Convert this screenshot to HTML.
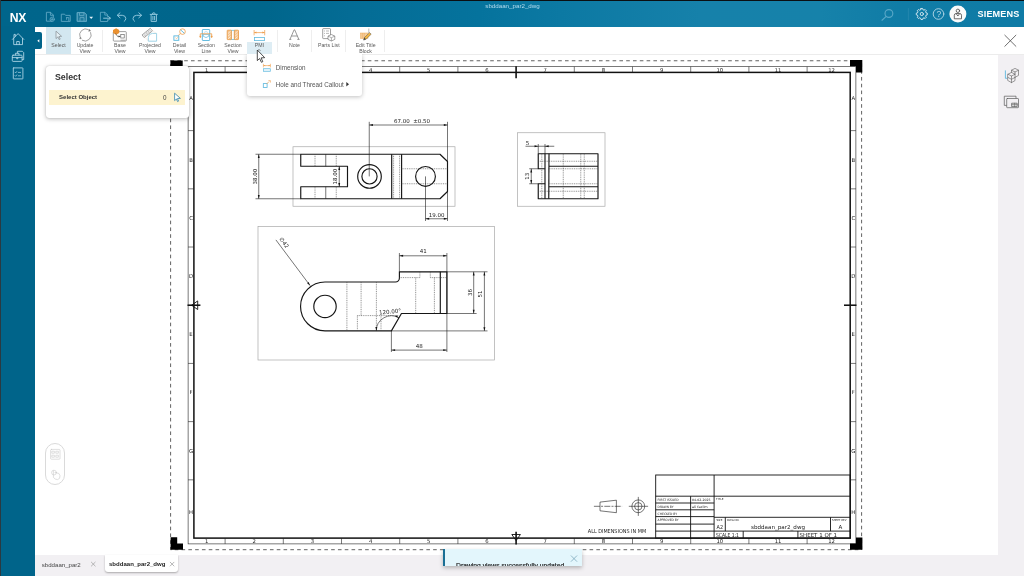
<!DOCTYPE html>
<html lang="en"><head><meta charset="utf-8"><title>NX - sbddaan_par2_dwg</title>
<style>
*{box-sizing:border-box;margin:0;padding:0}
html,body{width:1024px;height:576px;overflow:hidden;background:#fff;font-family:"Liberation Sans",sans-serif}
#app{position:relative;width:1024px;height:576px;overflow:hidden;background:#fff}
.fx{position:absolute;left:-12px;top:-12px;width:1048px;height:600px;background:#fff;filter:blur(.4px)}
.in{position:absolute;left:12px;top:12px;width:1024px;height:576px}
.abs{position:absolute}
.header{position:absolute;left:-12px;top:-12px;width:1048px;height:38.6px;background:linear-gradient(90deg,#00658b 12px,#00668c 278px,#046c95 362px,#05739d 492px,#0c79a3 572px,#1681aa 712px,#1682aa 832px,#107ca6 912px,#0f7ba6 1036px)}
.topblack{position:absolute;left:-12px;top:-12px;width:1048px;height:13.4px;background:#0b0f12}
.leftblack{position:absolute;left:-12px;top:-12px;width:13px;height:600px;background:#2a3a42}
.sidebar{position:absolute;left:-12px;top:26px;width:47px;height:562px;background:#00648a}
.nx{position:absolute;left:9.8px;top:10.7px;font-weight:bold;font-size:12.2px;line-height:14px;color:#fff;letter-spacing:-.35px}
.title{position:absolute;left:412.5px;width:200px;top:2.3px;text-align:center;color:#b4dcee;font-size:6.2px;line-height:7px}
.siemens{position:absolute;left:977.5px;top:8.6px;color:#fff;font-weight:bold;font-size:9.1px;line-height:11px;letter-spacing:.15px}
.toolbar{position:absolute;left:35px;top:26.5px;width:1001px;height:28px;background:#fff;border-bottom:1px solid #ececec}
.tb{position:absolute;top:27px;height:27px;text-align:center;color:#5a5a5a;font-size:5.2px;line-height:5.7px}
.tb span{position:absolute;left:-20px;right:-20px;top:16.2px}
.sep{position:absolute;top:29.5px;width:1px;height:22px;background:#eeeeee}
.panel{position:absolute;left:46px;top:65.5px;width:143px;height:52.5px;background:#fff;border-radius:3px;box-shadow:0 1px 4px rgba(0,0,0,.28),0 0 1px rgba(0,0,0,.25)}
.panel h1{position:absolute;left:9px;top:5.3px;font-size:8.8px;line-height:12px;color:#333;font-weight:bold}
.row{position:absolute;left:2.5px;top:24.9px;width:136.5px;height:14.9px;background:#fdf3cf}
.row b{position:absolute;left:10.6px;top:3.6px;font-size:6px;line-height:7px;color:#333}
.row i{position:absolute;left:114.6px;top:3.8px;font-size:6.3px;line-height:7px;color:#444;font-style:normal}
.menu{position:absolute;left:247px;top:54px;width:115px;height:42.2px;background:#fff;border-radius:0 0 3px 3px;box-shadow:0 1px 4px rgba(0,0,0,.25);clip-path:inset(0 -8px -8px -8px)}
.menu div{position:absolute;left:28.7px;font-size:6.3px;line-height:8px;color:#555;white-space:nowrap}
.right{position:absolute;left:998.2px;top:55px;width:38px;height:501px;background:#f2f0f3}
.tabs{position:absolute;left:35px;top:555.2px;width:1001px;height:33px;background:#f2f0f3}
.tab1{position:absolute;left:41.8px;top:560.5px;font-size:6.1px;line-height:8px;color:#444}
.tab2{position:absolute;left:104.5px;top:555.2px;width:73.5px;height:16.6px;background:#fff;border-radius:0 0 3px 3px;box-shadow:0 1px 2px rgba(0,0,0,.3)}
.tab2 b{position:absolute;left:4.5px;top:5.3px;font-size:6.05px;line-height:8px;color:#222}
.toast{position:absolute;left:443.3px;top:549.1px;width:138.7px;height:17.3px;background:#e3f6fc;border-left:2px solid #1a6f95;overflow:hidden;box-shadow:0 2px 4px rgba(0,0,0,.25)}
.toast span{position:absolute;left:10.8px;top:13.3px;font-size:6.75px;line-height:8px;color:#262626;-webkit-text-stroke:.2px #262626;white-space:nowrap}
.pill{position:absolute;left:45.2px;top:443.3px;width:20px;height:41.8px;border:1.2px solid #dadada;border-radius:10px;background:#fff}
svg{position:absolute;left:0;top:0;overflow:visible}
#dr{width:1024px;height:576px}
#dr .t{stroke:#222;stroke-width:.6;fill:none}
#dr .fr{stroke:#111;stroke-width:1.5;fill:none}
#dr .dash{stroke:#3a3a3a;stroke-width:.8;fill:none;stroke-dasharray:3.6 3.2}
#dr .cm{stroke:#111;stroke-width:1.6;fill:none}
#dr .blk{fill:#000}
#dr .vb{stroke:#a8a8a8;stroke-width:.7;fill:none}
#dr .k{stroke:#151515;stroke-width:1.15;fill:none;stroke-linejoin:round}
#dr .k1{stroke:#1a1a1a;stroke-width:.6;fill:none}
#dr .k3{stroke:#111;stroke-width:.9;fill:none}
#dr .k2{stroke:#1a1a1a;stroke-width:.6;fill:none}
#dr .h{stroke:#4a4a4a;stroke-width:.6;fill:none;stroke-dasharray:1 .8}
#dr .dm{stroke:#1a1a1a;stroke-width:.6;fill:none}
#dr .a{fill:#111}
#dr .tbl{stroke:#111;stroke-width:.9;fill:none}
#dr text{font-family:"DejaVu Sans","Liberation Sans",sans-serif;fill:#222}
#dr .d{font-size:5.5px}
#dr .z{font-size:5.3px}
#dr .tt{font-size:3.2px}
#dr .ts{font-size:2.8px}
</style></head>
<body>
<div id="app"><div class="fx"><div class="in">
<!-- canvas drawing -->
<svg id="dr" viewBox="0 0 1024 576">
<rect class="dash" x="170.6" y="60.75" width="691" height="488.95"/>
<rect class="t" x="188.1" y="66.7" width="667.8" height="477.2"/>
<rect class="fr" x="193.9" y="72.4" width="656.3" height="465.7"/>
<line class="t" x1="225.1" y1="66.7" x2="225.1" y2="72.4"/>
<line class="t" x1="225.1" y1="538.1" x2="225.1" y2="543.9"/>
<line class="t" x1="283.3" y1="66.7" x2="283.3" y2="72.4"/>
<line class="t" x1="283.3" y1="538.1" x2="283.3" y2="543.9"/>
<line class="t" x1="341.5" y1="66.7" x2="341.5" y2="72.4"/>
<line class="t" x1="341.5" y1="538.1" x2="341.5" y2="543.9"/>
<line class="t" x1="399.7" y1="66.7" x2="399.7" y2="72.4"/>
<line class="t" x1="399.7" y1="538.1" x2="399.7" y2="543.9"/>
<line class="t" x1="457.9" y1="66.7" x2="457.9" y2="72.4"/>
<line class="t" x1="457.9" y1="538.1" x2="457.9" y2="543.9"/>
<line class="t" x1="574.3" y1="66.7" x2="574.3" y2="72.4"/>
<line class="t" x1="574.3" y1="538.1" x2="574.3" y2="543.9"/>
<line class="t" x1="632.5" y1="66.7" x2="632.5" y2="72.4"/>
<line class="t" x1="632.5" y1="538.1" x2="632.5" y2="543.9"/>
<line class="t" x1="690.7" y1="66.7" x2="690.7" y2="72.4"/>
<line class="t" x1="690.7" y1="538.1" x2="690.7" y2="543.9"/>
<line class="t" x1="748.9" y1="66.7" x2="748.9" y2="72.4"/>
<line class="t" x1="748.9" y1="538.1" x2="748.9" y2="543.9"/>
<line class="t" x1="807.1" y1="66.7" x2="807.1" y2="72.4"/>
<line class="t" x1="807.1" y1="538.1" x2="807.1" y2="543.9"/>
<line class="t" x1="188.1" y1="130.62" x2="193.9" y2="130.62"/>
<line class="t" x1="850.2" y1="130.62" x2="855.9" y2="130.62"/>
<line class="t" x1="188.1" y1="188.83" x2="193.9" y2="188.83"/>
<line class="t" x1="850.2" y1="188.83" x2="855.9" y2="188.83"/>
<line class="t" x1="188.1" y1="247.03" x2="193.9" y2="247.03"/>
<line class="t" x1="850.2" y1="247.03" x2="855.9" y2="247.03"/>
<line class="t" x1="188.1" y1="363.43" x2="193.9" y2="363.43"/>
<line class="t" x1="850.2" y1="363.43" x2="855.9" y2="363.43"/>
<line class="t" x1="188.1" y1="421.62" x2="193.9" y2="421.62"/>
<line class="t" x1="850.2" y1="421.62" x2="855.9" y2="421.62"/>
<line class="t" x1="188.1" y1="479.83" x2="193.9" y2="479.83"/>
<line class="t" x1="850.2" y1="479.83" x2="855.9" y2="479.83"/>
<text class="z" x="206.6" y="71.6" text-anchor="middle">1</text>
<text class="z" x="206.6" y="543.2" text-anchor="middle">1</text>
<text class="z" x="254.2" y="71.6" text-anchor="middle">2</text>
<text class="z" x="254.2" y="543.2" text-anchor="middle">2</text>
<text class="z" x="312.4" y="71.6" text-anchor="middle">3</text>
<text class="z" x="312.4" y="543.2" text-anchor="middle">3</text>
<text class="z" x="370.6" y="71.6" text-anchor="middle">4</text>
<text class="z" x="370.6" y="543.2" text-anchor="middle">4</text>
<text class="z" x="428.8" y="71.6" text-anchor="middle">5</text>
<text class="z" x="428.8" y="543.2" text-anchor="middle">5</text>
<text class="z" x="487" y="71.6" text-anchor="middle">6</text>
<text class="z" x="487" y="543.2" text-anchor="middle">6</text>
<text class="z" x="545.2" y="71.6" text-anchor="middle">7</text>
<text class="z" x="545.2" y="543.2" text-anchor="middle">7</text>
<text class="z" x="603.4" y="71.6" text-anchor="middle">8</text>
<text class="z" x="603.4" y="543.2" text-anchor="middle">8</text>
<text class="z" x="661.6" y="71.6" text-anchor="middle">9</text>
<text class="z" x="661.6" y="543.2" text-anchor="middle">9</text>
<text class="z" x="719.8" y="71.6" text-anchor="middle">10</text>
<text class="z" x="719.8" y="543.2" text-anchor="middle">10</text>
<text class="z" x="778" y="71.6" text-anchor="middle">11</text>
<text class="z" x="778" y="543.2" text-anchor="middle">11</text>
<text class="z" x="831.5" y="71.6" text-anchor="middle">12</text>
<text class="z" x="831.5" y="543.2" text-anchor="middle">12</text>
<text class="z" x="191" y="100.46" text-anchor="middle">A</text>
<text class="z" x="853.3" y="100.46" text-anchor="middle">A</text>
<text class="z" x="191" y="161.53" text-anchor="middle">B</text>
<text class="z" x="853.3" y="161.53" text-anchor="middle">B</text>
<text class="z" x="191" y="219.73" text-anchor="middle">C</text>
<text class="z" x="853.3" y="219.73" text-anchor="middle">C</text>
<text class="z" x="191" y="277.93" text-anchor="middle">D</text>
<text class="z" x="853.3" y="277.93" text-anchor="middle">D</text>
<text class="z" x="191" y="336.13" text-anchor="middle">E</text>
<text class="z" x="853.3" y="336.13" text-anchor="middle">E</text>
<text class="z" x="191" y="394.32" text-anchor="middle">F</text>
<text class="z" x="853.3" y="394.32" text-anchor="middle">F</text>
<text class="z" x="191" y="452.53" text-anchor="middle">G</text>
<text class="z" x="853.3" y="452.53" text-anchor="middle">G</text>
<text class="z" x="191" y="513.66" text-anchor="middle">H</text>
<text class="z" x="853.3" y="513.66" text-anchor="middle">H</text>
<line class="cm" x1="516.1" y1="66.2" x2="516.1" y2="78.3"/>
<line class="cm" x1="516.1" y1="531.8" x2="516.1" y2="544.6"/>
<path class="k3" d="M511.8 534.5H520.4L516.1 540.6Z"/>
<line class="cm" x1="187.5" y1="305.23" x2="200.4" y2="305.23"/>
<path class="k3" d="M197.7 300.93V309.53L191.6 305.23Z"/>
<line class="cm" x1="844" y1="305.23" x2="856.5" y2="305.23"/>
<path class="blk" d="M170.4 60.5H182.7V72.5H176.6V66.2H170.4Z"/>
<path class="blk" d="M850 60H862.3V72.5H856V66.2H850Z"/>
<path class="blk" d="M170.6 537.3H177.2V543.4H183V549.8H170.6Z"/>
<path class="blk" d="M856 537.4H862.4V549.8H850V543.4H856Z"/>
<rect class="vb" x="293" y="146.75" width="162" height="59.5"/>
<path class="k" d="M300.75 154.25H440L447.5 161.5V191.5L440 198.75H300.75V186.75H347.5V166.25H300.75Z"/>
<line class="k" x1="391.7" y1="154.25" x2="391.7" y2="198.75"/>
<line class="k" x1="401.6" y1="154.25" x2="401.6" y2="198.75"/>
<line class="k1" x1="325.75" y1="154.25" x2="325.75" y2="166.25"/>
<line class="k1" x1="325.75" y1="186.75" x2="325.75" y2="198.75"/>
<line class="h" x1="315" y1="154.25" x2="315" y2="166.25"/>
<line class="h" x1="315" y1="186.75" x2="315" y2="198.75"/>
<line class="h" x1="336.25" y1="154.25" x2="336.25" y2="166.25"/>
<line class="h" x1="336.25" y1="186.75" x2="336.25" y2="198.75"/>
<line class="h" x1="393.6" y1="154.25" x2="393.6" y2="198.75"/>
<line class="h" x1="399.6" y1="154.25" x2="399.6" y2="198.75"/>
<line class="h" x1="401.6" y1="168.75" x2="447.5" y2="168.75"/>
<line class="h" x1="401.6" y1="183.75" x2="447.5" y2="183.75"/>
<circle class="k" cx="369.5" cy="176.4" r="11.8"/>
<circle class="k" cx="369.5" cy="176.4" r="7.6"/>
<circle class="k" cx="425.5" cy="176.4" r="9.9"/>
<line class="dm" x1="369.25" y1="121.8" x2="369.25" y2="176.4"/>
<line class="dm" x1="447.5" y1="121.8" x2="447.5" y2="221"/>
<line class="dm" x1="369.25" y1="125" x2="447.5" y2="125"/>
<polygon class="a" points="369.25,125 372.95,124.05 372.95,125.95"/>
<polygon class="a" points="447.5,125 443.8,125.95 443.8,124.05"/>
<text class="d" x="412" y="123" text-anchor="middle">67.00  ±0.50</text>
<line class="dm" x1="255.5" y1="154.25" x2="300.75" y2="154.25"/>
<line class="dm" x1="255.5" y1="198.75" x2="300.75" y2="198.75"/>
<line class="dm" x1="258.75" y1="154.25" x2="258.75" y2="198.75"/>
<polygon class="a" points="258.75,154.25 259.7,157.95 257.8,157.95"/>
<polygon class="a" points="258.75,198.75 257.8,195.05 259.7,195.05"/>
<text class="d" x="256.6" y="176.5" text-anchor="middle" transform="rotate(-90 256.6 176.5)">38.00</text>
<line class="dm" x1="339.25" y1="166.25" x2="339.25" y2="186.75"/>
<polygon class="a" points="339.25,166.25 340.2,169.95 338.3,169.95"/>
<polygon class="a" points="339.25,186.75 338.3,183.05 340.2,183.05"/>
<text class="d" x="337.2" y="176.5" text-anchor="middle" transform="rotate(-90 337.2 176.5)">18.00</text>
<line class="dm" x1="425.5" y1="176.4" x2="425.5" y2="221"/>
<line class="dm" x1="425.5" y1="218.75" x2="447.5" y2="218.75"/>
<polygon class="a" points="425.5,218.75 429.2,217.8 429.2,219.7"/>
<polygon class="a" points="447.5,218.75 443.8,219.7 443.8,217.8"/>
<text class="d" x="436.7" y="216.6" text-anchor="middle">19.00</text>
<rect class="vb" x="517.5" y="132.75" width="87.5" height="73.5"/>
<path class="k" d="M538.25 153.75H598V198.75H538.25V183.75H545V168.75H538.25Z"/>
<line class="k" x1="545" y1="153.75" x2="545" y2="168.75"/>
<line class="k" x1="545" y1="183.75" x2="545" y2="198.75"/>
<line class="k" x1="549" y1="153.75" x2="548.75" y2="198.75"/>
<line class="k" x1="549" y1="166.25" x2="598" y2="166.25"/>
<line class="k" x1="549" y1="186.75" x2="598" y2="186.75"/>
<line class="h" x1="538.25" y1="161.25" x2="598" y2="161.25"/>
<line class="h" x1="548.75" y1="168.75" x2="598" y2="168.75"/>
<line class="h" x1="548.75" y1="183.75" x2="598" y2="183.75"/>
<line class="h" x1="538.25" y1="191.25" x2="598" y2="191.25"/>
<line class="h" x1="563.25" y1="153.75" x2="563.25" y2="198.75"/>
<line class="h" x1="580.75" y1="153.75" x2="580.75" y2="198.75"/>
<line class="h" x1="584.25" y1="153.75" x2="584.25" y2="198.75"/>
<line class="h" x1="541.8" y1="153.75" x2="541.8" y2="198.75"/>
<line class="dm" x1="538.25" y1="144" x2="538.25" y2="153.75"/>
<line class="dm" x1="545" y1="144" x2="545" y2="153.75"/>
<line class="dm" x1="525.5" y1="146.25" x2="554.25" y2="146.25"/>
<polygon class="a" points="538.25,146.25 534.55,147.2 534.55,145.3"/>
<polygon class="a" points="545,146.25 548.7,145.3 548.7,147.2"/>
<text class="d" x="527.4" y="144.6" text-anchor="middle">5</text>
<line class="dm" x1="529.2" y1="168.75" x2="538.25" y2="168.75"/>
<line class="dm" x1="529.2" y1="183.75" x2="538.25" y2="183.75"/>
<line class="dm" x1="531.25" y1="168.75" x2="531.25" y2="183.75"/>
<polygon class="a" points="531.25,168.75 532.2,172.45 530.3,172.45"/>
<polygon class="a" points="531.25,183.75 530.3,180.05 532.2,180.05"/>
<text class="d" x="529.3" y="176.3" text-anchor="middle" transform="rotate(-90 529.3 176.3)">13</text>
<rect class="vb" x="258" y="226.6" width="236.5" height="133.4"/>
<path class="k" d="M325 282H395.4A4 4 0 0 0 399.4 278V271.8H446.9V313.5H401.45L391.4 330.9H325A24.45 24.45 0 0 1 325 282Z"/>
<line class="k" x1="440.3" y1="271.8" x2="440.3" y2="313.5"/>
<circle class="k" cx="325" cy="306.45" r="11.2"/>
<line class="h" x1="346.9" y1="282" x2="346.9" y2="330.9"/>
<line class="h" x1="361.1" y1="282" x2="361.1" y2="315.6"/>
<line class="h" x1="376.4" y1="282" x2="376.4" y2="330.9"/>
<line class="h" x1="357.4" y1="315.6" x2="399" y2="315.6"/>
<line class="h" x1="357.4" y1="315.6" x2="357.4" y2="330.9"/>
<line class="h" x1="381" y1="315.6" x2="381" y2="330.9"/>
<line class="h" x1="415.7" y1="277.6" x2="415.7" y2="313.5"/>
<line class="h" x1="434.4" y1="277.6" x2="434.4" y2="313.5"/>
<line class="h" x1="399.4" y1="277.6" x2="419.9" y2="277.6"/>
<line class="h" x1="419.9" y1="271.8" x2="419.9" y2="277.6"/>
<line class="h" x1="430.3" y1="271.8" x2="430.3" y2="277.6"/>
<line class="h" x1="430.3" y1="277.6" x2="446.9" y2="277.6"/>
<line class="dm" x1="275.9" y1="239.9" x2="310.1" y2="285.6"/>
<polygon class="a" points="310.1,285.6 307.12,283.21 308.64,282.07"/>
<text class="d" x="279" y="239.1" transform="rotate(53 279 239.1)" font-size="5.8">∅42</text>
<line class="dm" x1="399.4" y1="253" x2="399.4" y2="271.8"/>
<line class="dm" x1="446.9" y1="253" x2="446.9" y2="352"/>
<line class="dm" x1="399.4" y1="255.8" x2="446.9" y2="255.8"/>
<polygon class="a" points="399.4,255.8 403.1,254.85 403.1,256.75"/>
<polygon class="a" points="446.9,255.8 443.2,256.75 443.2,254.85"/>
<text class="d" x="423.2" y="253.4" text-anchor="middle">41</text>
<line class="dm" x1="446.9" y1="271.8" x2="487.5" y2="271.8"/>
<line class="dm" x1="446.9" y1="313.5" x2="476.6" y2="313.5"/>
<line class="dm" x1="391.4" y1="330.9" x2="487.5" y2="330.9"/>
<line class="dm" x1="473.7" y1="271.8" x2="473.7" y2="313.5"/>
<polygon class="a" points="473.7,271.8 474.65,275.5 472.75,275.5"/>
<polygon class="a" points="473.7,313.5 472.75,309.8 474.65,309.8"/>
<text class="d" x="471.7" y="292.5" text-anchor="middle" transform="rotate(-90 471.7 292.5)">36</text>
<line class="dm" x1="484.4" y1="271.8" x2="484.4" y2="330.9"/>
<polygon class="a" points="484.4,271.8 485.35,275.5 483.45,275.5"/>
<polygon class="a" points="484.4,330.9 483.45,327.2 485.35,327.2"/>
<text class="d" x="482.4" y="294" text-anchor="middle" transform="rotate(-90 482.4 294)">51</text>
<line class="dm" x1="391.4" y1="330.9" x2="391.4" y2="352"/>
<line class="dm" x1="391.4" y1="350.1" x2="446.9" y2="350.1"/>
<polygon class="a" points="391.4,350.1 395.1,349.15 395.1,351.05"/>
<polygon class="a" points="446.9,350.1 443.2,351.05 443.2,349.15"/>
<text class="d" x="419.3" y="348" text-anchor="middle">48</text>
<path class="dm" d="M376.3 330.9A15.1 15.1 0 0 1 398.95 317.82"/>
<polygon class="a" points="376.3,330.6 375.35,326.9 377.25,326.9"/>
<polygon class="a" points="398.95,317.82 395.27,316.8 396.22,315.15"/>
<text class="d" x="379.3" y="314.6" transform="rotate(-5.5 379.3 314.6)">120.00°</text>
<rect class="tbl" x="655.7" y="475" width="194.5" height="63.1"/>
<line class="tbl" x1="714.1" y1="475" x2="714.1" y2="538.1"/>
<line class="tbl" x1="714.1" y1="496.2" x2="850.2" y2="496.2"/>
<line class="tbl" x1="714.1" y1="517.3" x2="850.2" y2="517.3"/>
<line class="tbl" x1="714.1" y1="531.1" x2="850.2" y2="531.1"/>
<line class="tbl" x1="725.3" y1="517.3" x2="725.3" y2="531.1"/>
<line class="tbl" x1="830.5" y1="517.3" x2="830.5" y2="531.1"/>
<line class="tbl" x1="743.2" y1="531.1" x2="743.2" y2="538.1"/>
<line class="tbl" x1="797.9" y1="531.1" x2="797.9" y2="538.1"/>
<line class="tbl" x1="655.7" y1="496.2" x2="714.1" y2="496.2"/>
<line class="tbl" x1="655.7" y1="503" x2="714.1" y2="503"/>
<line class="tbl" x1="655.7" y1="509.8" x2="714.1" y2="509.8"/>
<line class="tbl" x1="655.7" y1="516.6" x2="714.1" y2="516.6"/>
<line class="tbl" x1="655.7" y1="524.1" x2="714.1" y2="524.1"/>
<line class="tbl" x1="655.7" y1="531.1" x2="714.1" y2="531.1"/>
<line class="tbl" x1="690.6" y1="496.2" x2="690.6" y2="538.1"/>
<text class="tt" x="657.6" y="500.9" textLength="21" lengthAdjust="spacingAndGlyphs">FIRST ISSUED</text>
<text class="tt" x="657.6" y="507.75" textLength="16" lengthAdjust="spacingAndGlyphs">DRAWN BY</text>
<text class="tt" x="657.6" y="514.6" textLength="19.5" lengthAdjust="spacingAndGlyphs">CHECKED BY</text>
<text class="tt" x="657.6" y="521.45" textLength="21" lengthAdjust="spacingAndGlyphs">APPROVED BY</text>
<text class="tt" x="692" y="500.9" textLength="18.6" lengthAdjust="spacingAndGlyphs">04-02-2025</text>
<text class="tt" x="692" y="507.7" textLength="15.8" lengthAdjust="spacingAndGlyphs">ali fazlim</text>
<text class="ts" x="716" y="500" textLength="7.6" lengthAdjust="spacingAndGlyphs">TITLE</text>
<text class="ts" x="716.4" y="521" textLength="6" lengthAdjust="spacingAndGlyphs">SIZE</text>
<text class="ts" x="727" y="521" textLength="12.4" lengthAdjust="spacingAndGlyphs">DWG NO.</text>
<text class="ts" x="832" y="521" textLength="14.5" lengthAdjust="spacingAndGlyphs">SHEET REV</text>
<text class="d" x="716.6" y="529.4" font-size="6" textLength="6.5" lengthAdjust="spacingAndGlyphs">A2</text>
<text class="d" x="778" y="529.2" text-anchor="middle" font-size="6" textLength="54" lengthAdjust="spacingAndGlyphs">sbddaan_par2_dwg</text>
<text class="d" x="840.3" y="529.4" text-anchor="middle" font-size="6">A</text>
<text class="d" x="716" y="536.9" font-size="6" textLength="22.8" lengthAdjust="spacingAndGlyphs">SCALE 1:1</text>
<text class="d" x="799.6" y="536.9" font-size="6" textLength="37.5" lengthAdjust="spacingAndGlyphs">SHEET 1 OF 1</text>
<path class="k2" d="M600 502.1L616.4 500.2V512.7L600 510.8Z"/>
<line class="dm" x1="593.9" y1="506.3" x2="622.1" y2="506.3" stroke-dasharray="6 1.2 2 1.2"/>
<circle class="k2" cx="638.3" cy="506.3" r="6.4"/>
<circle class="k2" cx="638.3" cy="506.3" r="3.7"/>
<line class="dm" x1="628.8" y1="506.3" x2="648.1" y2="506.3"/>
<line class="dm" x1="638.3" y1="496.9" x2="638.3" y2="515.9"/>
<text class="d" x="617" y="533" text-anchor="middle" font-size="5.3" textLength="58.3" lengthAdjust="spacingAndGlyphs">ALL DIMENSIONS IN MM</text>
</svg>

<!-- right resource panel -->
<div class="right"></div>

<!-- toolbar -->
<div class="toolbar"></div>
<div class="tb sel" style="left:46px;width:25px;background:#d3e7f0"><span>Select</span></div>
<div class="tb" style="left:75px;width:20px"><span>Update<br>View</span></div>
<div class="sep" style="left:102px"></div>
<div class="tb" style="left:110px;width:20px"><span>Base<br>View</span></div>
<div class="tb" style="left:140px;width:20px"><span>Projected<br>View</span></div>
<div class="tb" style="left:169.5px;width:20px"><span>Detail<br>View</span></div>
<div class="tb" style="left:196.3px;width:20px"><span>Section<br>Line</span></div>
<div class="tb" style="left:223px;width:20px"><span>Section<br>View</span></div>
<div class="abs" style="left:247px;top:42.2px;width:25px;height:11.6px;background:#deedf4"></div>
<div class="tb" style="left:249.4px;width:20px"><span>PMI</span></div>
<div class="sep" style="left:276.5px"></div>
<div class="tb" style="left:284.4px;width:20px"><span>Note</span></div>
<div class="sep" style="left:311px"></div>
<div class="tb" style="left:318.8px;width:20px"><span>Parts List</span></div>
<div class="sep" style="left:345.2px"></div>
<div class="tb" style="left:355.6px;width:20px"><span>Edit Title<br>Block</span></div>
<div class="sep" style="left:384px"></div>
<svg id="ti" viewBox="0 0 1024 576" width="1024" height="576">
<!-- select cursor -->
<path d="M56 31.2V38.6L57.9 36.9L59.2 39.6L60.2 39.1L58.9 36.5L61.6 36.3Z" fill="#e4f0f5" stroke="#7d8388" stroke-width=".65" stroke-linejoin="round"/>
<!-- update view -->
<path d="M80.2 37.5A6.1 6.1 0 0 1 88.6 29.6" fill="none" stroke="#8c8c8c" stroke-width=".8"/>
<path d="M90.5 32.2A6.1 6.1 0 0 1 82 40.2" fill="none" stroke="#8c8c8c" stroke-width=".8"/>
<path d="M89.4 29.3L90.6 30.9L88.6 31.3Z M81.3 38.8L79.6 38.5L80.6 37.1Z" fill="#777" stroke="#777" stroke-width=".4"/>
<!-- base view -->
<rect x="113.3" y="31.6" width="13" height="9.5" rx=".8" fill="#fff" stroke="#777" stroke-width=".7"/>
<path d="M113 30L116.1 28.2L119.2 30V33L116.1 34.8L113 33Z" fill="#ea9130"/>
<path d="M115.6 33.4L117.5 36.4H120.4" fill="none" stroke="#444" stroke-width=".6"/>
<path d="M120.4 36.4L118.6 35.4V37.4Z" fill="#444"/>
<rect x="120.8" y="34.6" width="3.4" height="3.4" fill="none" stroke="#555" stroke-width=".6"/>
<path d="M120.5 40.2H125.5" stroke="#666" stroke-width=".5"/>
<!-- projected view -->
<g transform="rotate(-39 147.3 33)"><rect x="142" y="31.2" width="10.6" height="3.4" fill="#fff" stroke="#777" stroke-width=".6"/><rect x="143.4" y="32.1" width="1.9" height="1.6" fill="none" stroke="#888" stroke-width=".4"/><rect x="146.3" y="32.1" width="1.9" height="1.6" fill="none" stroke="#888" stroke-width=".4"/><rect x="149.2" y="32.1" width="1.9" height="1.6" fill="none" stroke="#888" stroke-width=".4"/></g>
<path d="M148.3 41.2V37.4Q148.5 33.6 152.4 33.4H156.6V41.2Z" fill="#fff" stroke="#9fd3e6" stroke-width="1"/>
<path d="M151 29.5L156 33.2M144 36.2L148 40.6" stroke="#eac7b0" stroke-width=".3"/>
<!-- detail view -->
<circle cx="182.5" cy="31.6" r="2.8" fill="#fff" stroke="#ee9a45" stroke-width=".8"/>
<path d="M180.6 29.9L184.3 33.2" stroke="#5db8dc" stroke-width=".9"/>
<path d="M180.3 33.6L177.5 36.2" stroke="#ee9a45" stroke-width=".7"/>
<rect x="173.9" y="35.9" width="4.9" height="4.4" fill="#fff" stroke="#56b6dc" stroke-width=".9"/>
<path d="M175.2 37.4L176.6 38.8L178.2 36.8" fill="none" stroke="#e9a45f" stroke-width=".5"/>
<!-- section line -->
<rect x="202.3" y="29.5" width="7.4" height="11" rx=".5" fill="#fff" stroke="#56b6dc" stroke-width=".9"/>
<path d="M203.6 33.2Q206 30 208.4 33.2" fill="none" stroke="#8fcfe6" stroke-width=".6"/>
<path d="M203.2 36.2Q206 39 208.8 36.2V34.4H203.2Z" fill="#fff" stroke="#56b6dc" stroke-width=".7"/>
<path d="M200.3 36.8V33.8H211.7V36.8" fill="none" stroke="#ee9a45" stroke-width=".8"/>
<path d="M199.6 36L200.3 38L201.1 36Z M210.9 36L211.7 38L212.4 36Z" fill="#ee9a45" stroke="#ee9a45" stroke-width=".4"/>
<!-- section view -->
<rect x="231" y="30.3" width="3.6" height="9.2" fill="#fff" stroke="#6cc0e2" stroke-width=".8"/>
<rect x="227.2" y="30.2" width="4.2" height="9.4" rx=".5" fill="#f6c48d" stroke="#e99842" stroke-width=".8"/>
<rect x="234.3" y="30.2" width="4.2" height="9.4" rx=".5" fill="#f6c48d" stroke="#e99842" stroke-width=".8"/>
<path d="M228 33.5L230.6 31.2M228 36.2L230.6 33.9M228 38.8L230.6 36.5M235.1 33.5L237.7 31.2M235.1 36.2L237.7 33.9M235.1 38.8L237.7 36.5" stroke="#fff" stroke-width=".6"/>
<!-- PMI -->
<path d="M254.1 30V35.3M264.7 30V35.3M254.1 32.6H264.7" fill="none" stroke="#ee9a45" stroke-width=".7"/>
<path d="M254.3 32.6L256.4 31.6V33.6Z M264.5 32.6L262.4 31.6V33.6Z" fill="#ee9a45"/>
<rect x="254.4" y="37.5" width="10" height="3.1" fill="#fff" stroke="#62bbdf" stroke-width=".8"/>
<path d="M257.4 50.6L259 49.5L260.6 50.6" fill="none" stroke="#555" stroke-width=".6"/>
<!-- Note -->
<path d="M290 39.3L294.1 29.8H294.7L298.8 39.3M291.5 36H297.3M289.3 39.4H291.3M297.3 39.4H299.5" fill="none" stroke="#6d6d6d" stroke-width=".7"/>
<!-- Parts list -->
<rect x="322.7" y="28.6" width="7.8" height="10" rx=".6" fill="#fff" stroke="#777" stroke-width=".7"/>
<path d="M324 31H325M326 31H329M324 33.4H325M326 33.4H329M324 35.8H325" stroke="#888" stroke-width=".6"/>
<path d="M328 36.1L331.4 34.5L334.8 36.1V39.4L331.4 41L328 39.4Z" fill="#fff" stroke="#666" stroke-width=".6" stroke-linejoin="round"/>
<path d="M328 36.1L331.4 37.7L334.8 36.1M331.4 37.7V41" fill="none" stroke="#666" stroke-width=".5"/>
<!-- edit title block -->
<rect x="360.4" y="33" width="7.6" height="5.4" fill="#f6cf9c" stroke="#ecaa5c" stroke-width=".5"/>
<path d="M362.3 33V38.4M364.2 33V38.4" stroke="#e99842" stroke-width=".4"/>
<path d="M368.8 28.5V33" stroke="#777" stroke-width=".5"/>
<path d="M363.6 40.1L364.4 37.6L369.6 32.6L371.2 34.2L366 39.2Z" fill="#f6b73f" stroke="#555" stroke-width=".5" stroke-linejoin="round"/>
<path d="M363.6 40.1L364.4 37.6L366 39.2Z" fill="#444"/>
</svg>

<svg id="ri" viewBox="0 0 1024 576" width="1024" height="576" fill="none" stroke-linejoin="round" stroke-linecap="round">
<path d="M1004.8 35.2L1015.9 46.3M1015.9 35.2L1004.8 46.3" stroke="#4a4a4a" stroke-width=".8"/>
<path d="M1005.4 70.8V78.3H1007" stroke="#4ab0dc" stroke-width=".8"/>
<g stroke="#5a5a5a" stroke-width=".6">
<path d="M1008 74.2L1011.5 72.4L1015 74.2V80.6L1011.5 82.6L1008 80.6ZM1008 74.2L1011.5 76.1L1015 74.2M1011.5 76.1V82.6M1008 77.4L1011.5 79.3L1015 77.4"/>
<path d="M1011.5 72.4V70.2L1015 68.4L1018.5 70.2V75.4L1015 77.4M1011.5 70.2L1015 72L1018.5 70.2M1015 72V74.2"/>
</g>
<g stroke="#5a5a5a" stroke-width=".7">
<path d="M1006.6 105.4H1004.3V96.2H1016V98.4"/>
<rect x="1006.7" y="98.5" width="11.8" height="9.2" rx=".6" fill="#f2f0f3"/>
<rect x="1012" y="103.2" width="5.2" height="3.4" fill="#ddd"/>
<path d="M1012 104.6H1017.2M1014.6 103.2V106.6" stroke-width=".5"/>
</g>
</svg>


<!-- header -->
<div class="header"></div>
<div class="sidebar"></div>
<div class="topblack"></div>
<div class="leftblack"></div>
<div class="nx">NX</div>
<div class="title">sbddaan_par2_dwg</div>
<div class="siemens">SIEMENS</div>
<svg id="hi" viewBox="0 0 1024 576" width="1024" height="576" fill="none" stroke-linecap="round" stroke-linejoin="round">
<g stroke="#5ea6c3" stroke-width=".9">
<!-- new -->
<path d="M51.6 21.2H46.4V12.3H50.6L53.4 15.1V16.6M50.4 12.4V15.3H53.3"/>
<circle cx="52.2" cy="19.3" r="2.2"/><path d="M52.2 18.2V20.4M51.1 19.3H53.3"/>
<!-- open -->
<path d="M61.3 21V14.2H64.6L65.6 15.4H70.2V21ZM66.6 17.6H68.8V21M66.6 17.6V19.4"/>
<!-- save -->
<path d="M77.6 12.6H84.3L86.4 14.7V21.3H77.6Z" fill="#5ea6c3" fill-opacity=".3"/><path d="M77.6 12.6H84.3L86.4 14.7V21.3H77.6ZM79.5 12.8V15.6H83.9V12.8M80 21.2V17.6H84V21.2"/>
<!-- export -->
<path d="M107.6 19.6V21.5H100.4V12.3H105L107.6 14.9V16.6M104.8 12.4V15.1H107.5"/>
</g>
<path d="M89.3 16.8H93.1L91.2 18.9Z" fill="#e8f3f8" stroke="none"/>
<g stroke="#8cc4da" stroke-width="1">
<path d="M103.6 18.2H110.4M108.6 16.6L110.4 18.2L108.6 19.8"/>
<!-- undo -->
<path d="M120 12.8L117.2 15.3L120 17.8M117.4 15.3H122.3Q125.8 15.6 125.8 18.6Q125.7 20.4 124.2 21.3"/>
<!-- redo -->
<path d="M138.8 12.8L141.6 15.3L138.8 17.8M141.4 15.3H136.5Q133 15.6 133 18.6Q133.1 20.4 134.6 21.3"/>
<!-- trash -->
<path d="M150.2 14.4H157.3M151.1 14.6V21.4H156.4V14.6M152.3 14.2L152.9 12.9H154.6L155.2 14.2M152.9 16.4V19.8M154.6 16.4V19.8"/>
</g>
<!-- search -->
<g stroke="#58a7c7" stroke-width="1.15"><circle cx="888.9" cy="13.5" r="3.9"/><path d="M886.2 16.4L882 20.2"/></g>
<path d="M908.4 8.5V20" stroke="#2f8db4" stroke-width=".6"/>
<!-- gear -->
<g stroke="#d8e9f1" stroke-width=".9">
<path d="M920.8 8.4H922.8L923.2 9.9L924.6 10.5L926 9.7L927.4 11.1L926.6 12.5L927.2 13.9L928.7 14.3V16.3L927.2 16.7L926.6 18.1L927.4 19.5L926 20.9L924.6 20.1L923.2 20.7L922.8 22.2H920.8L920.4 20.7L919 20.1L917.6 20.9L916.2 19.5L917 18.1L916.4 16.7L914.9 16.3V14.3L916.4 13.9L917 12.5L916.2 11.1L917.6 9.7L919 10.5L920.4 9.9Z" transform="translate(921.8 14) scale(.8) translate(-921.8 -15.3)" stroke-width="1.2"/>
<circle cx="921.8" cy="14" r="1.6"/>
<!-- help -->
<circle cx="938.5" cy="14" r="5.3" stroke="#b5d7e6"/>
</g>
<circle cx="957.9" cy="14" r="8.5" fill="#fbfbfb" stroke="none"/>
<g stroke="#4a4a4a" stroke-width=".8">
<circle cx="957.9" cy="10.8" r="1.7"/>
<path d="M954.3 18.4V15.2Q954.4 13.6 956 13.5H959.8Q961.4 13.6 961.5 15.2V18.4ZM956.4 14L957.9 16L959.4 14"/>
</g>
</svg>
<div class="abs" style="left:936.4px;top:9.6px;width:4.4px;text-align:center;font-size:8.6px;line-height:9px;color:#b5d7e6">?</div>
<!-- sidebar -->
<div class="abs" style="left:35px;top:32.4px;width:6.6px;height:16.4px;background:#00648a;border-radius:0 2px 2px 0"></div>
<svg id="si" viewBox="0 0 1024 576" width="1024" height="576" fill="none" stroke="#b4d9e8" stroke-width=".85" stroke-linejoin="round" stroke-linecap="round">
<path d="M37.3 40.8L39.3 39.2V42.4Z" fill="#fff" stroke="none"/>
<!-- home -->
<path d="M12.4 39.4L18.1 33.6L23.8 39.4M13.7 38.4V44.6H22.5V38.4M16.7 44.5V41.5H19.3V44.5M14 37.6V34.4H15.3V36.2"/>
<!-- briefcase -->
<rect x="12.3" y="55.2" width="9.8" height="6.2" rx=".8"/>
<path d="M15.4 55V53.3H19V55M12.4 57.6H22M16.7 57.7V58.8H17.8V57.7M17.4 53V51.3H22.4L23.7 52.6V59.6H22.3"/>
<!-- list -->
<rect x="13.3" y="67.9" width="9.6" height="11" rx=".4"/>
<path d="M15 72.2L15.7 72.9L16.8 71.5M18.3 72.4H20.6M15 75.6L15.7 76.3L16.8 74.9M18.3 75.8H20.6" stroke-width=".7"/>
</svg>


<!-- select panel -->
<div class="panel"><h1>Select</h1><div class="row"><b>Select Object</b><i>0</i></div></div>

<!-- PMI dropdown -->
<div class="menu"><div style="top:9.8px">Dimension</div><div style="top:26.8px">Hole and Thread Callout</div></div>
<svg id="mi" viewBox="0 0 1024 576" width="1024" height="576" fill="none">
<path d="M263.4 63.8V67.4M270.4 63.8V67.4M263.4 65.6H270.4" stroke="#ee9a45" stroke-width=".6"/>
<path d="M263.6 65.6L265.2 64.9V66.3Z M270.2 65.6L268.6 64.9V66.3Z" fill="#ee9a45"/>
<rect x="263.5" y="68.7" width="6.8" height="2.6" fill="#e6f4fa" stroke="#62bbdf" stroke-width=".7"/>
<rect x="263.3" y="83.6" width="3.8" height="3.8" fill="#fff" stroke="#56b6dc" stroke-width=".8"/>
<path d="M266.6 84L269 81.6" stroke="#ee9a45" stroke-width=".7"/>
<path d="M268.4 80.6H270.4V82.6" stroke="#ee9a45" stroke-width=".6"/>
<path d="M346.3 82L349 84.3L346.3 86.6Z" fill="#333"/>
</svg>


<div class="pill"></div>

<!-- bottom tabs -->
<div class="tabs"></div>
<div class="tab1">sbddaan_par2</div>
<div class="tab2"><b>sbddaan_par2_dwg</b></div>
<div class="toast"><span>Drawing views successfully updated</span></div>
<svg id="ov" viewBox="0 0 1024 576" width="1024" height="576" fill="none" stroke-linecap="round" stroke-linejoin="round">
<!-- select panel cursor icon -->
<path d="M174.6 93.6V100.6L176.4 99L177.6 101.6L178.6 101.1L177.4 98.6L180 98.4Z" fill="#fff" stroke="#1b79a6" stroke-width=".7"/>
<!-- pill icons -->
<g stroke="#c9c9c9" stroke-width=".6">
<rect x="50.6" y="449.4" width="9.4" height="9.8" rx=".8"/>
<path d="M52.2 451.2H54.4V453.2H52.2ZM56.2 451.2H58.4V453.2H56.2ZM52.2 455.2H54.4V457.2H52.2ZM56.2 455.2H58.4V457.2H56.2Z"/>
<circle cx="54" cy="472.6" r="2.4"/><path d="M53.4 471V477.4Q55 479.6 57.6 479.6Q60.4 479 60 475.6L58.8 473.4L55 472.6"/>
</g>
<!-- tab close -->
<path d="M91.4 562.2L95.2 566M95.2 562.2L91.4 566" stroke="#9a9a9a" stroke-width=".7"/>
<path d="M170.2 562.2L174 566M174 562.2L170.2 566" stroke="#9a9a9a" stroke-width=".7"/>
<!-- toast close -->
<path d="M571.2 555.8L576.8 561.4M576.8 555.8L571.2 561.4" stroke="#6e9db3" stroke-width=".7"/>
<!-- mouse pointer -->
<path d="M257.3 50.4V60.6L259.6 58.5L261.4 62.3L262.8 61.7L261.1 57.9L264.3 57.7Z" fill="#fff" stroke="#222" stroke-width=".8"/>
</svg>

</div></div></div>
</body></html>
